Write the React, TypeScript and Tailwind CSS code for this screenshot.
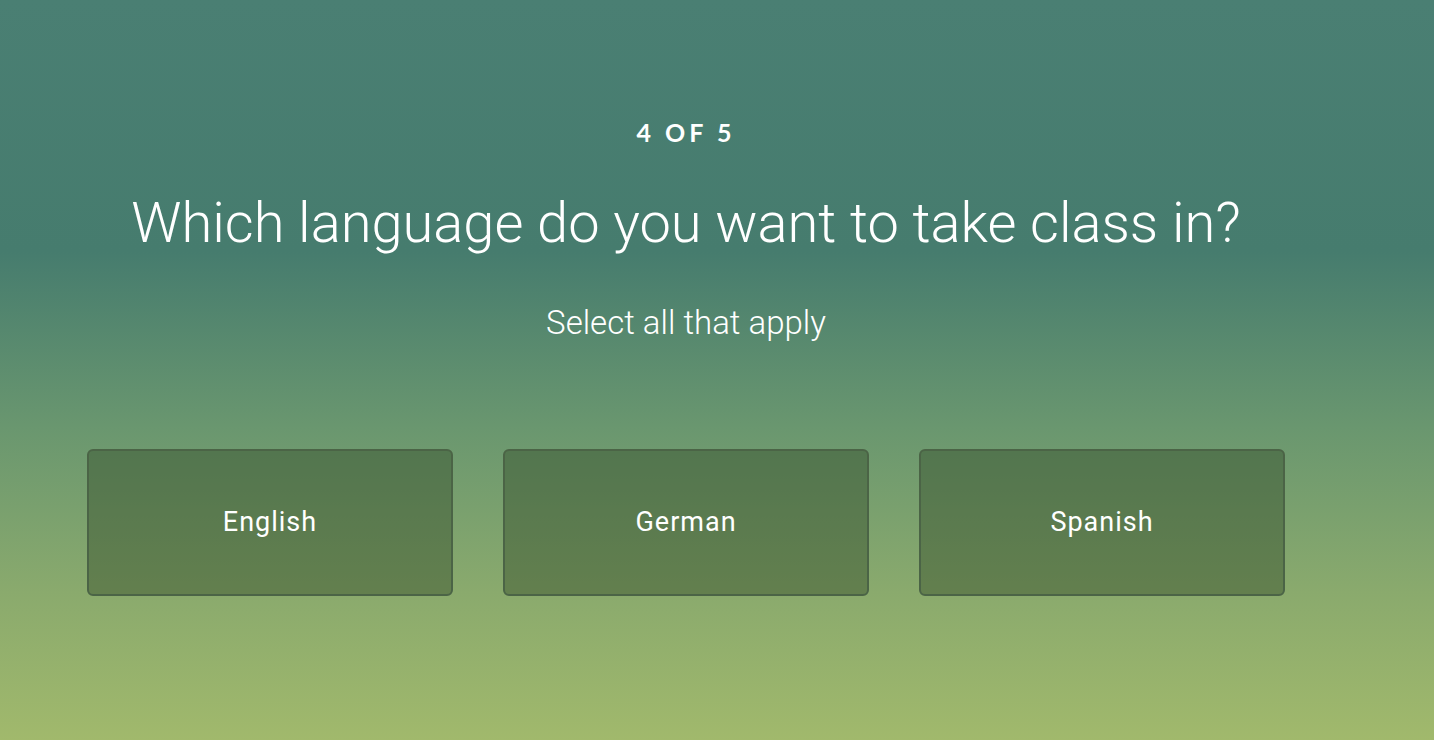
import React from 'react';

const options = ['English', 'German', 'Spanish'];

const App = () => {
  return (
    <div className="h-[740px] w-full overflow-hidden bg-[linear-gradient(to_bottom,#4a7f73_0%,#467c6e_34%,#6a976f_58%,#8aaa6d_80%,#a1b96c_100%)] font-['Roboto',sans-serif] text-white">
      <div className="flex w-[1372px] flex-col items-center">
        {/* Step counter */}
        <p className="mt-[117px] font-['Lato',sans-serif] text-[25px] font-bold leading-[30px] tracking-[4px]">
          4 OF 5
        </p>

        <h1 className="mt-[43px] text-[56px] font-light leading-[66px]">
          Which language do you want to take class in?
        </h1>

        <p className="mt-[47px] text-[33px] font-light leading-[40px]">Select all that apply</p>

        {/* Options */}
        <div className="mt-[106px] flex gap-[50px]">
          {options.map((label) => (
            <button
              key={label}
              className="flex h-[147px] w-[366px] items-center justify-center rounded-[6px] border-2 border-[#4b6446] bg-[rgba(45,68,35,0.42)] text-[27px] tracking-[1px] text-white"
            >
              {label}
            </button>
          ))}
        </div>
      </div>
    </div>
  );
};

export default App;
